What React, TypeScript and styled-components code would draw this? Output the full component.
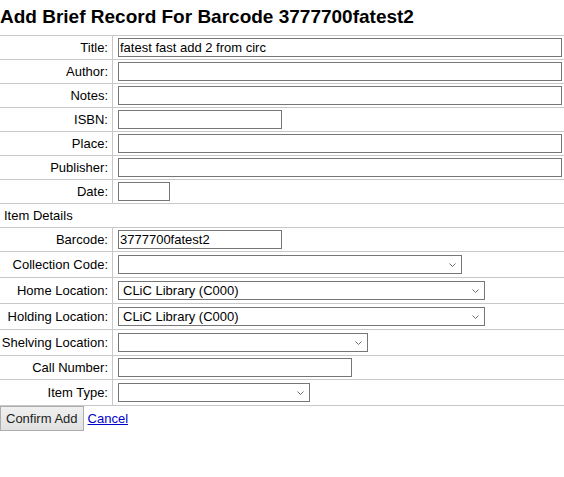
import React from "react";
import styled, { createGlobalStyle } from "styled-components";

const Global = createGlobalStyle`
  html, body { margin: 0; padding: 0; background: #fff; }
  body { font-family: "Liberation Sans", Arial, sans-serif; font-size: 13px; color: #000; }
`;

const Page = styled.div`
  display: flex;
  flex-direction: column;
`;

const Heading = styled.h1`
  margin: 6px 0 7px 0;
  font-size: 19px;
  line-height: 22px;
  font-weight: bold;
  white-space: nowrap;
`;

const Form = styled.div`
  display: flex;
  flex-direction: column;
  border-top: 1px solid #c8c8c8;
`;

const Row = styled.div<{ $tall?: boolean }>`
  display: grid;
  grid-template-columns: 113px 1fr;
  min-height: ${(p) => (p.$tall ? 25 : 23)}px;
  border-bottom: 1px solid #c8c8c8;
`;

const Label = styled.div`
  display: flex;
  align-items: center;
  justify-content: flex-end;
  padding-right: 4px;
  border-right: 1px solid #c8c8c8;
  white-space: nowrap;
`;

const Field = styled.div`
  display: flex;
  align-items: center;
  padding-left: 5px;
`;

const SectionRow = styled.div`
  display: flex;
  align-items: center;
  height: 23px;
  padding-left: 4px;
  border-bottom: 1px solid #c8c8c8;
`;

const TextInput = styled.input<{ $w: number }>`
  box-sizing: border-box;
  width: ${(p) => p.$w}px;
  height: 19px;
  margin: 0;
  padding: 0 1px;
  border: 1px solid #767676;
  border-radius: 0;
  font-family: "Liberation Sans", Arial, sans-serif;
  font-size: 13px;
  color: #000;
  background: #fff;
  outline: none;
`;

const SelectWrap = styled.div<{ $w: number }>`
  position: relative;
  width: ${(p) => p.$w}px;
  height: 19px;
`;

const Select = styled.select`
  box-sizing: border-box;
  appearance: none;
  -webkit-appearance: none;
  width: 100%;
  height: 19px;
  margin: 0;
  padding: 0 20px 0 4px;
  border: 1px solid #767676;
  border-radius: 0;
  background: #fff;
  font-family: "Liberation Sans", Arial, sans-serif;
  font-size: 13px;
  color: #000;
  outline: none;
`;

const Chevron = styled.svg`
  position: absolute;
  right: 6px;
  top: 8px;
  width: 7px;
  height: 4px;
  pointer-events: none;
`;

const Actions = styled.div`
  display: flex;
  align-items: center;
  gap: 4px;
`;

const Button = styled.button`
  box-sizing: border-box;
  height: 25px;
  margin: 0;
  padding: 0 5px;
  white-space: nowrap;
  border: 1px solid #adadad;
  border-radius: 0;
  background: linear-gradient(#f0f0f0, #e1e1e1);
  font-family: "Liberation Sans", Arial, sans-serif;
  font-size: 13px;
  color: #222;
`;

const Link = styled.a`
  color: #0000cc;
  text-decoration: underline;
  font-size: 13px;
`;

const TextRow = ({ label, w, value = "" }: { label: string; w: number; value?: string }) => (
  <Row>
    <Label>{label}</Label>
    <Field>
      <TextInput $w={w} defaultValue={value} />
    </Field>
  </Row>
);

const SelectRow = ({ label, w, value = "" }: { label: string; w: number; value?: string }) => (
  <Row $tall>
    <Label>{label}</Label>
    <Field>
      <SelectWrap $w={w}>
        <Select defaultValue={value}>
          <option value={value}>{value}</option>
        </Select>
        <Chevron viewBox="0 0 7 4">
          <polyline points="0.5,0.5 3.5,3.5 6.5,0.5" fill="none" stroke="#6d6d6d" strokeWidth="1" />
        </Chevron>
      </SelectWrap>
    </Field>
  </Row>
);

export default function App() {
  return (
    <Page>
      <Global />
      <Heading>Add Brief Record For Barcode 3777700fatest2</Heading>
      <Form>
        <TextRow label="Title:" w={444} value="fatest fast add 2 from circ" />
        <TextRow label="Author:" w={444} />
        <TextRow label="Notes:" w={444} />
        <TextRow label="ISBN:" w={164} />
        <TextRow label="Place:" w={444} />
        <TextRow label="Publisher:" w={444} />
        <TextRow label="Date:" w={52} />
        <SectionRow>Item Details</SectionRow>
        <TextRow label="Barcode:" w={164} value="3777700fatest2" />
        <SelectRow label="Collection Code:" w={344} />
        <SelectRow label="Home Location:" w={367} value="CLiC Library (C000)" />
        <SelectRow label="Holding Location:" w={367} value="CLiC Library (C000)" />
        <SelectRow label="Shelving Location:" w={250} />
        <TextRow label="Call Number:" w={234} />
        <SelectRow label="Item Type:" w={192} />
      </Form>
      <Actions>
        <Button type="button">Confirm Add</Button>
        <Link href="#">Cancel</Link>
      </Actions>
    </Page>
  );
}
